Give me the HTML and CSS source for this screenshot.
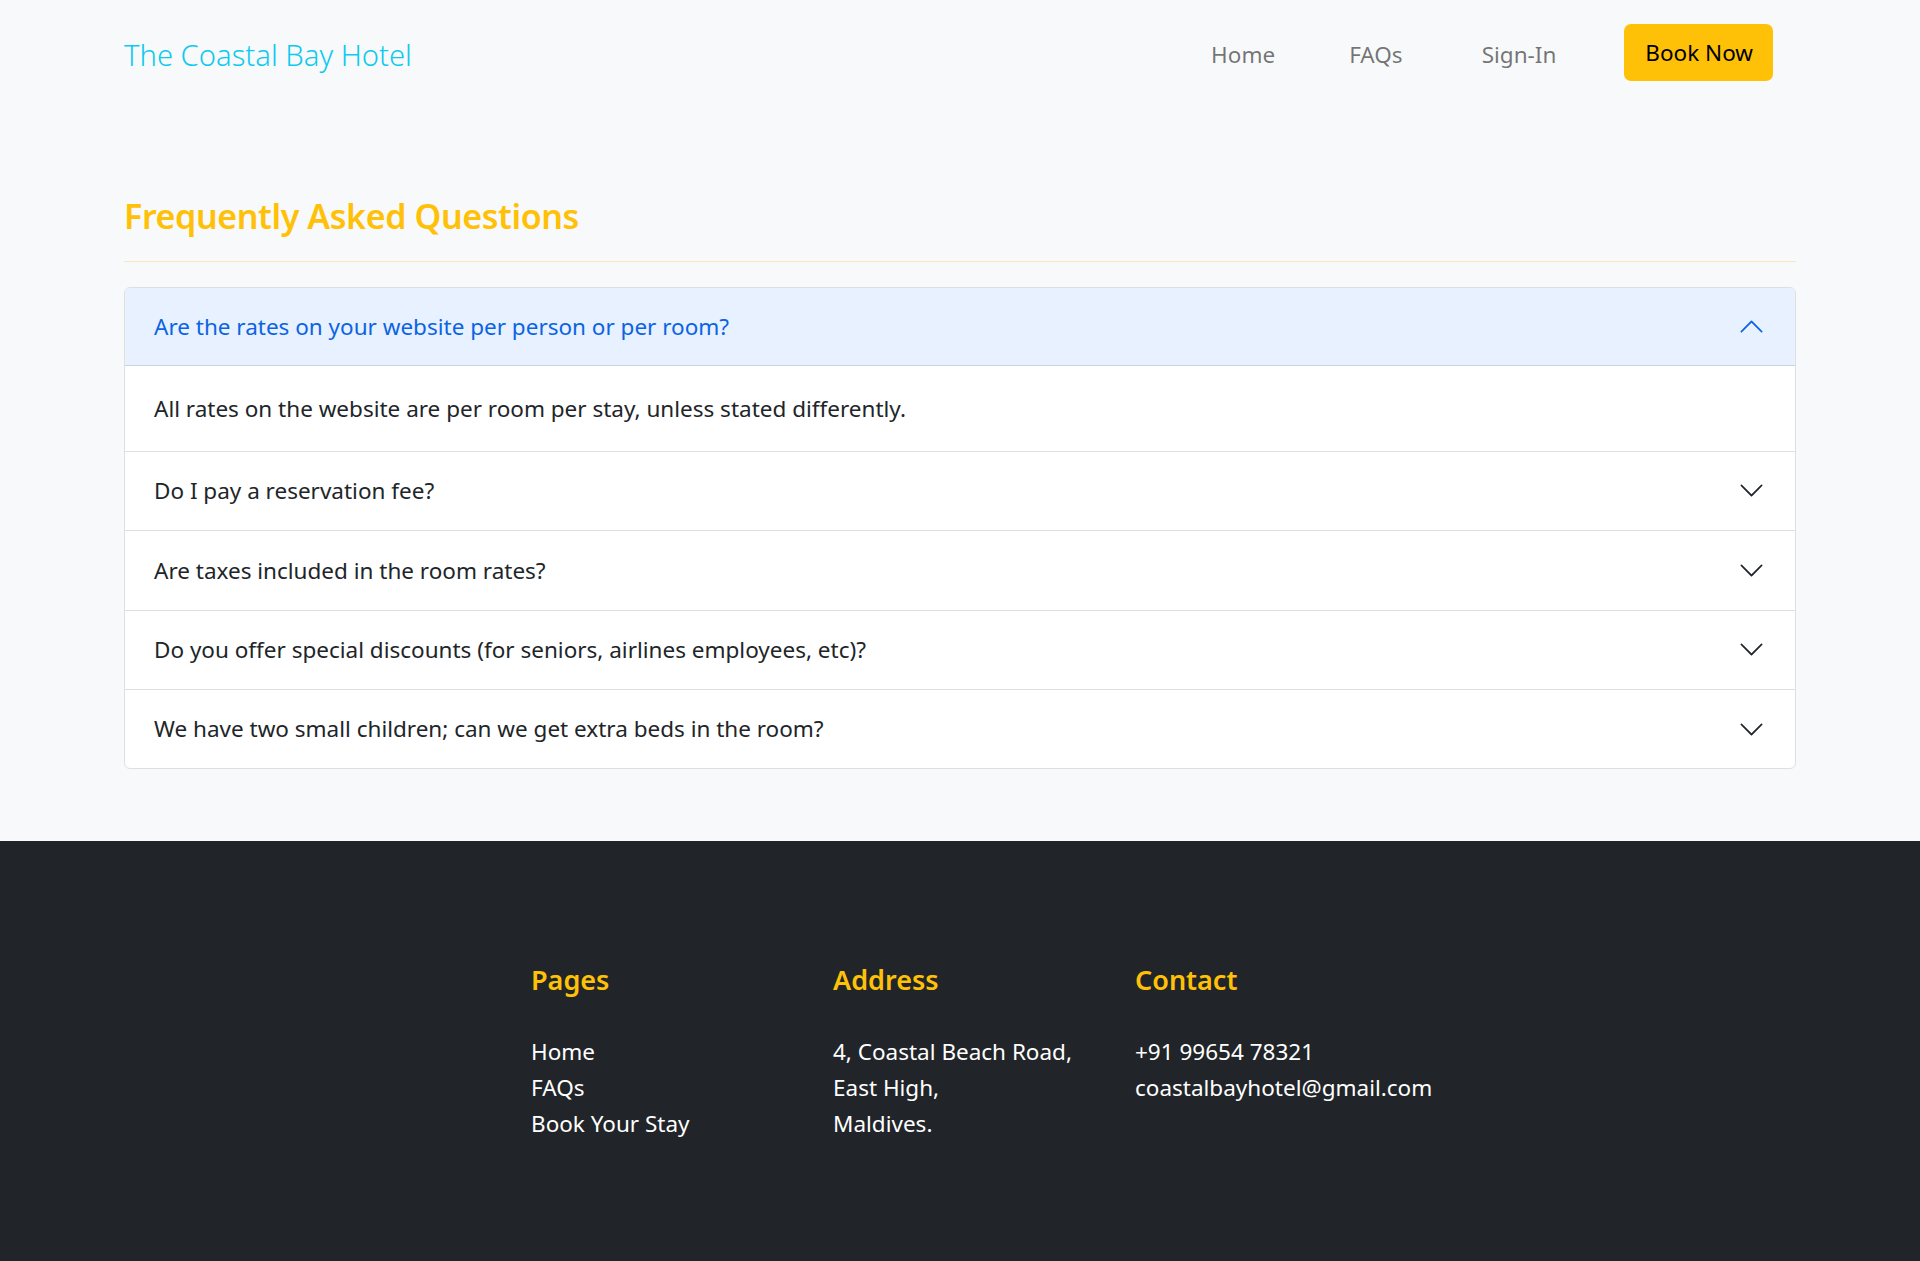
FILE: index.html
```html
<!DOCTYPE html>
<html lang="en">
<head>
<meta charset="utf-8">
<title>FAQs - The Coastal Bay Hotel</title>
<link rel="stylesheet" href="styles.css">
</head>
<body>
<header class="site-header">
  <div class="container header-inner">
    <a class="brand" href="#">The Coastal Bay Hotel</a>
    <nav class="main-nav">
      <a class="nav-link" href="#">Home</a>
      <a class="nav-link" href="#">FAQs</a>
      <a class="nav-link nav-link-last" href="#">Sign-In</a>
      <a class="btn-book" href="#">Book Now</a>
    </nav>
  </div>
</header>

<main class="container faq">
  <h3 class="faq-title">Frequently Asked Questions</h3>
  <hr class="faq-rule">
  <div class="accordion">
    <div class="acc-item">
      <div class="acc-header active">
        <span class="acc-q">Are the rates on your website per person or per room?</span>
        <svg class="chev" viewBox="0 0 16 16"><path d="M1.646 4.646a.5.5 0 0 1 .708 0L8 10.293l5.646-5.647a.5.5 0 0 1 .708.708l-6 6a.5.5 0 0 1-.708 0l-6-6a.5.5 0 0 1 0-.708z"/></svg>
      </div>
      <div class="acc-body">All rates on the website are per room per stay, unless stated differently.</div>
    </div>
    <div class="acc-item">
      <div class="acc-header">
        <span class="acc-q">Do I pay a reservation fee?</span>
        <svg class="chev" viewBox="0 0 16 16"><path d="M1.646 4.646a.5.5 0 0 1 .708 0L8 10.293l5.646-5.647a.5.5 0 0 1 .708.708l-6 6a.5.5 0 0 1-.708 0l-6-6a.5.5 0 0 1 0-.708z"/></svg>
      </div>
    </div>
    <div class="acc-item">
      <div class="acc-header">
        <span class="acc-q">Are taxes included in the room rates?</span>
        <svg class="chev" viewBox="0 0 16 16"><path d="M1.646 4.646a.5.5 0 0 1 .708 0L8 10.293l5.646-5.647a.5.5 0 0 1 .708.708l-6 6a.5.5 0 0 1-.708 0l-6-6a.5.5 0 0 1 0-.708z"/></svg>
      </div>
    </div>
    <div class="acc-item">
      <div class="acc-header">
        <span class="acc-q">Do you offer special discounts (for seniors, airlines employees, etc)?</span>
        <svg class="chev" viewBox="0 0 16 16"><path d="M1.646 4.646a.5.5 0 0 1 .708 0L8 10.293l5.646-5.647a.5.5 0 0 1 .708.708l-6 6a.5.5 0 0 1-.708 0l-6-6a.5.5 0 0 1 0-.708z"/></svg>
      </div>
    </div>
    <div class="acc-item">
      <div class="acc-header">
        <span class="acc-q">We have two small children; can we get extra beds in the room?</span>
        <svg class="chev" viewBox="0 0 16 16"><path d="M1.646 4.646a.5.5 0 0 1 .708 0L8 10.293l5.646-5.647a.5.5 0 0 1 .708.708l-6 6a.5.5 0 0 1-.708 0l-6-6a.5.5 0 0 1 0-.708z"/></svg>
      </div>
    </div>
  </div>
</main>

<footer class="site-footer">
  <div class="container footer-grid">
    <div class="f-col">
      <h5 class="f-title">Pages</h5>
      <ul class="f-list">
        <li>Home</li>
        <li>FAQs</li>
        <li>Book Your Stay</li>
      </ul>
    </div>
    <div class="f-col">
      <h5 class="f-title">Address</h5>
      <ul class="f-list">
        <li>4, Coastal Beach Road,</li>
        <li>East High,</li>
        <li>Maldives.</li>
      </ul>
    </div>
    <div class="f-col">
      <h5 class="f-title">Contact</h5>
      <ul class="f-list">
        <li>+91 99654 78321</li>
        <li>coastalbayhotel@gmail.com</li>
      </ul>
    </div>
  </div>
</footer>
</body>
</html>
```
FILE: styles.css
```css
* { box-sizing: border-box; }
html, body { margin: 0; padding: 0; }
body {
  background: #f8f9fa;
  color: #212529;
  font-family: "Noto Sans", "Open Sans", sans-serif;
  font-size: 22.5px;
  line-height: 1.5;
}
a { text-decoration: none; }

.container {
  width: 1672px;
  margin: 0 auto;
}

/* Header */
.site-header { padding-top: 24px; height: 105px; }
.header-inner {
  display: flex;
  align-items: flex-start;
  justify-content: space-between;
}
.brand {
  margin-top: 10px;
  font-size: 29.2px;
  font-weight: 300;
  line-height: 1.5;
  color: #0dcaf0;
}
.main-nav {
  display: flex;
  align-items: flex-start;
  margin-right: 23px;
}
.nav-link {
  margin-top: 14px;
  padding: 0 37px;
  color: rgba(0, 0, 0, 0.55);
  line-height: 33.75px;
}
.nav-link-last { padding-left: 42px; }
.btn-book {
  margin-left: 31px;
  height: 57px;
  padding: 0 20px 0 21px;
  display: flex;
  align-items: center;
  background: #ffc107;
  color: #000;
  border-radius: 7px;
  line-height: 33.75px;
}

/* FAQ */
.faq { padding-top: 91px; padding-bottom: 72px; }
.faq-title {
  margin: 0;
  font-size: 34px;
  font-weight: 600;
  letter-spacing: -0.4px;
  line-height: 1.2;
  color: #ffc107;
}
.faq-rule {
  margin: 24px 0 25px;
  border: 0;
  border-top: 1px solid #f7e8bb;
}
.accordion {
  background: #fff;
  border: 1px solid #dfdfdf;
  border-radius: 6px;
  overflow: hidden;
}
.acc-item + .acc-item { border-top: 1px solid #dfdfdf; }
.acc-header {
  display: flex;
  align-items: center;
  padding: 22.4px 30px 22.4px 29px;
  line-height: 33.6px;
  color: #212529;
}
.acc-header.active {
  background: #e7f1ff;
  color: #0c63e4;
  box-shadow: inset 0 -1px 0 rgba(0, 0, 0, 0.125);
}
.acc-q { flex: 1; }
.chev {
  width: 27px;
  height: 27px;
  fill: #212529;
  flex-shrink: 0;
}
.acc-header.active .chev {
  fill: #0c63e4;
  transform: rotate(180deg);
}
.acc-body {
  padding: 26px 28px 25px 29px;
  line-height: 33.6px;
}

/* Footer */
.site-footer {
  background: #212529;
  color: #fff;
  padding: 123px 0 119px;
}
.footer-grid {
  display: grid;
  grid-template-columns: repeat(3, 302px);
  padding-left: 407px;
}
.f-title {
  margin: 0 0 37.5px;
  font-size: 27px;
  font-weight: 600;
  line-height: 1.2;
  color: #ffc107;
}
.f-list {
  list-style: none;
  margin: 0;
  padding: 0;
  line-height: 36px;
}
```
